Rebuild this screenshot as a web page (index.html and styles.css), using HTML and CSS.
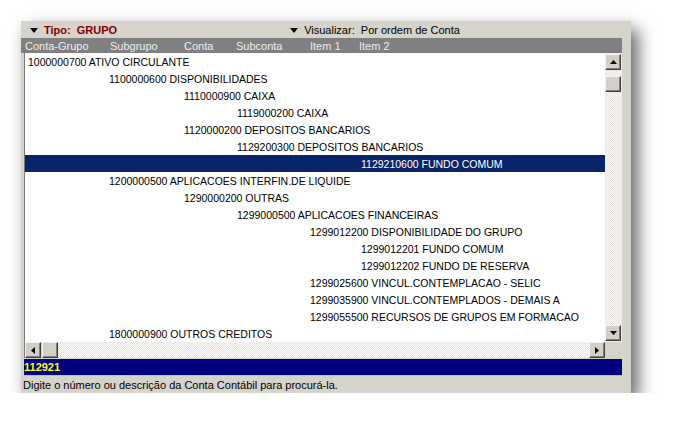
FILE: index.html
```html
<!DOCTYPE html>
<html lang="pt">
<head>
    <meta charset="UTF-8">
    <title>Plano de Contas</title>
    <link rel="stylesheet" href="styles.css">
</head>
<body>
    <div class="window">
        <div class="titlebar">
            <span class="drop tipo"><i class="caret"></i><b>Tipo:&nbsp; GRUPO</b></span>
            <span class="drop view"><i class="caret"></i>Visualizar:&nbsp; Por ordem de Conta</span>
        </div>
        <div class="columns">
            <span class="c1">Conta-Grupo</span>
            <span class="c2">Subgrupo</span>
            <span class="c3">Conta</span>
            <span class="c4">Subconta</span>
            <span class="c5">Item 1</span>
            <span>Item 2</span>
        </div>
        <div class="listbox">
            <div class="list-main">
                <ul class="rows">
                    <li class="l0">1000000700 ATIVO CIRCULANTE</li>
                    <li class="l1">1100000600 DISPONIBILIDADES</li>
                    <li class="l2">1110000900 CAIXA</li>
                    <li class="l3">1119000200 CAIXA</li>
                    <li class="l2">1120000200 DEPOSITOS BANCARIOS</li>
                    <li class="l3">1129200300 DEPOSITOS BANCARIOS</li>
                    <li class="l5 selected">1129210600 FUNDO COMUM</li>
                    <li class="l1">1200000500 APLICACOES INTERFIN.DE LIQUIDE</li>
                    <li class="l2">1290000200 OUTRAS</li>
                    <li class="l3">1299000500 APLICACOES FINANCEIRAS</li>
                    <li class="l4">1299012200 DISPONIBILIDADE DO GRUPO</li>
                    <li class="l5">1299012201 FUNDO COMUM</li>
                    <li class="l5">1299012202 FUNDO DE RESERVA</li>
                    <li class="l4">1299025600 VINCUL.CONTEMPLACAO - SELIC</li>
                    <li class="l4">1299035900 VINCUL.CONTEMPLADOS - DEMAIS A</li>
                    <li class="l4">1299055500 RECURSOS DE GRUPOS EM FORMACAO</li>
                    <li class="l1">1800000900 OUTROS CREDITOS</li>
                </ul>
                <div class="vscroll">
                    <div class="btn"><svg width="7" height="4"><path d="M0 4h7L3.5 0z"/></svg></div>
                    <div class="btn thumb v-thumb"></div>
                    <div class="track"></div>
                    <div class="btn"><svg width="7" height="4"><path d="M0 0h7L3.5 4z"/></svg></div>
                </div>
            </div>
            <div class="hscroll-row">
                <div class="hscroll">
                    <div class="btn"><svg width="4" height="7"><path d="M4 0v7L0 3.5z"/></svg></div>
                    <div class="btn thumb"></div>
                    <div class="track"></div>
                    <div class="btn"><svg width="4" height="7"><path d="M0 0v7L4 3.5z"/></svg></div>
                </div>
                <div class="corner"></div>
            </div>
        </div>
        <div class="search">112921</div>
        <div class="status">Digite o número ou descrição da Conta Contábil para procurá-la.</div>
    </div>
</body>
</html>
```

FILE: styles.css
```css
* {
    margin: 0;
    padding: 0;
    box-sizing: border-box;
}

body {
    background: #fff;
    font-family: "Liberation Sans", Arial, sans-serif;
    font-size: 11px;
    color: #000;
}

.window {
    margin: 21px 0 0 21px;
    width: 610px;
    height: 372px;
    background: #d6d3cc;
    box-shadow: 7px 8px 16px rgba(0, 0, 0, 0.6);
}

.titlebar {
    height: 17px;
    display: flex;
    align-items: center;
    padding: 1px 0 0 9px;
}

.drop {
    display: flex;
    align-items: center;
}

.tipo b {
    color: #800000;
    font-weight: bold;
}

.view {
    margin-left: 173px;
}

.caret {
    width: 0;
    height: 0;
    border-left: 4px solid transparent;
    border-right: 4px solid transparent;
    border-top: 5px solid #000;
    margin-right: 6px;
}

.columns {
    width: 601px;
    height: 15px;
    background: #808080;
    color: #ececec;
    display: flex;
    align-items: center;
    padding: 1px 0 0 4px;
}

.columns .c1 { width: 85px; }
.columns .c2 { width: 74px; }
.columns .c3 { width: 52px; }
.columns .c4 { width: 74px; }
.columns .c5 { width: 49px; }

.listbox {
    margin-left: 3px;
    width: 598px;
    border-left: 1px solid #7a7a7a;
}

.list-main {
    display: flex;
    height: 289px;
}

.rows {
    list-style: none;
    flex: 1;
    background: #fff;
    font-size: 10.5px;
}

.rows li {
    height: 17px;
    line-height: 19px;
    white-space: nowrap;
}

.rows .l0 { padding-left: 3px; }
.rows .l1 { padding-left: 84px; }
.rows .l2 { padding-left: 159px; }
.rows .l3 { padding-left: 212px; }
.rows .l4 { padding-left: 285px; }
.rows .l5 { padding-left: 336px; }

.rows .selected {
    background: #0a246a;
    color: #fff;
}

.track {
    flex: 1;
    background: repeating-conic-gradient(#e4e2dc 0 25%, #fbfbfa 0 50%) 0 0 / 2px 2px;
}

.vscroll {
    width: 17px;
    display: flex;
    flex-direction: column;
    padding: 1px 1px 1px 0;
    background: repeating-conic-gradient(#e4e2dc 0 25%, #fbfbfa 0 50%) 0 0 / 2px 2px;
}

.btn {
    width: 16px;
    height: 16px;
    flex: none;
    background: #d4d0c8;
    border: 1px solid;
    border-color: #f4f4f4 #404040 #404040 #f4f4f4;
    box-shadow: inset -1px -1px #808080;
    display: flex;
    align-items: center;
    justify-content: center;
}

.v-thumb {
    margin-top: 6px;
}

.hscroll-row {
    display: flex;
    height: 16px;
}

.hscroll {
    flex: 1;
    display: flex;
}

.hscroll .thumb {
    margin-left: 1px;
}

.corner {
    width: 17px;
    background: #d6d3cc;
}

.search {
    margin: 1px 0 0 3px;
    width: 598px;
    height: 17px;
    line-height: 17px;
    background: #000080;
    color: #ffff00;
    font-weight: bold;
    border-bottom: 1px solid #b8b8e0;
}

.status {
    height: 17px;
    line-height: 18px;
    padding-left: 2px;
}
```
